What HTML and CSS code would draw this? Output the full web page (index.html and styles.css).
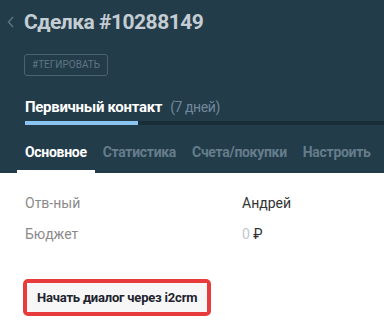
FILE: index.html
```html
<html>
  <head>
    <title>Сделка #10288149</title>
    <link rel="stylesheet" href="styles.css">
  </head>
  <body>
    <div class="top">
      <div class="title-row">
        <svg class="back" width="8" height="12" viewBox="0 0 8 12"><path d="M6 1 L1.5 6 L6 11" fill="none" stroke="#5a7280" stroke-width="1.6"/></svg>
        <div class="title">Сделка #10288149</div>
      </div>
      <div class="tag-btn">#тегировать</div>
      <div class="stage">
        <span class="stage-name">Первичный контакт</span>
        <span class="stage-days">(7 дней)</span>
      </div>
      <div class="progress"><div class="progress-fill"></div></div>
      <div class="tabs">
        <div class="tab active">Основное</div>
        <div class="tab">Статистика</div>
        <div class="tab">Счета/покупки</div>
        <div class="tab">Настроить</div>
      </div>
    </div>
    <div class="content">
      <div class="field">
        <div class="label">Отв-ный</div>
        <div class="value">Андрей</div>
      </div>
      <div class="field">
        <div class="label">Бюджет</div>
        <div class="value"><span class="zero">0</span> ₽</div>
      </div>
      <div class="action">
        <div class="action-btn">Начать диалог через i2crm</div>
      </div>
    </div>
  </body>
</html>
```

FILE: styles.css
```css
body {
  margin: 0;
  background: #fff;
  font-family: Roboto, "Liberation Sans", sans-serif;
  overflow: hidden;
}
.top {
  background: #233c4a;
  padding-top: 10px;
}
.title-row {
  display: flex;
  align-items: center;
  height: 24px;
}
.back {
  margin-left: 7px;
  margin-right: 9px;
}
.title {
  color: #c3cdd3;
  font-size: 21px;
  font-weight: bold;
  letter-spacing: -0.5px;
}
.tag-btn {
  display: inline-block;
  margin: 20px 0 0 24px;
  height: 20px;
  line-height: 20px;
  padding: 0 7px;
  border: 1px solid #4b6270;
  border-radius: 3px;
  color: #5d7584;
  font-size: 10px;
  text-transform: uppercase;
}
.stage {
  margin: 21px 0 0 25px;
  height: 20px;
  line-height: 20px;
}
.stage-name {
  color: #fff;
  font-size: 15px;
  font-weight: bold;
  letter-spacing: -0.3px;
}
.stage-days {
  color: #70889a;
  font-size: 14px;
  letter-spacing: -0.4px;
  margin-left: 4px;
}
.progress {
  margin: 4px 0 0 25px;
  height: 4px;
  background: #172d38;
}
.progress-fill {
  width: 113px;
  height: 4px;
  background: #8cc4f0;
}
.tabs {
  display: flex;
  margin-top: 19px;
  padding-left: 17px;
}
.tab {
  padding: 0 8px 10px;
  color: #657d8b;
  font-size: 14px;
  font-weight: bold;
  letter-spacing: -0.3px;
  border-bottom: 3px solid transparent;
}
.tab.active {
  color: #fff;
  border-bottom-color: #fff;
}
.content {
  padding: 22px 0 0 25px;
}
.field {
  display: flex;
  height: 31px;
  font-size: 14px;
}
.label {
  width: 217px;
  color: #8b8b8b;
}
.value {
  color: #333;
}
.zero {
  color: #c0c7cf;
}
.action {
  display: inline-block;
  margin: 22px 0 0 -2px;
  border: 4px solid #e83c3c;
  border-radius: 5px;
}
.action-btn {
  background: #f7f7f7;
  padding: 0 10px;
  height: 29px;
  line-height: 29px;
  color: #21232e;
  font-size: 13px;
  font-weight: bold;
  letter-spacing: -0.2px;
}
```
